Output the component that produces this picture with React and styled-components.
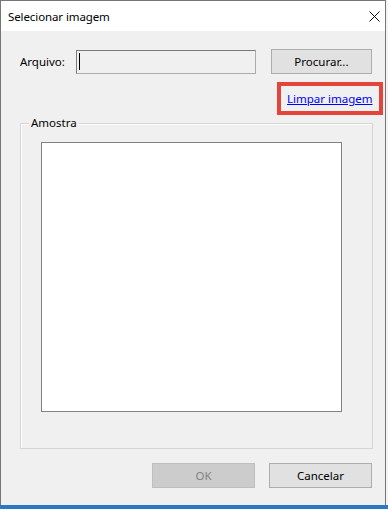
import React from "react";
import styled, { createGlobalStyle } from "styled-components";

const GlobalStyle = createGlobalStyle`
  html, body {
    margin: 0;
    padding: 0;
    background: #f4f4f4;
  }
  body {
    font-family: "Noto Sans", "Open Sans", sans-serif;
    font-size: 12px;
    color: #000;
  }
`;

const Screen = styled.div`
  width: 388px;
  height: 509px;
  display: flex;
  flex-direction: column;
`;

const Window = styled.div`
  width: 384px;
  height: 504px;
  border: 1px solid #767676;
  border-bottom: none;
  background: #f0f0f0;
  display: flex;
  flex-direction: column;
`;

const Taskbar = styled.div`
  height: 4px;
  background: #2b79c4;
`;

const TitleBar = styled.div`
  height: 30px;
  background: #ffffff;
  display: flex;
  align-items: center;
  justify-content: space-between;
  padding: 0 4px 0 7px;
  flex-shrink: 0;
`;

const Title = styled.span`
  font-size: 11.5px;
  letter-spacing: -0.1px;
`;

const CloseButton = styled.div`
  width: 14px;
  height: 14px;
  display: flex;
  align-items: center;
  justify-content: center;
`;

const Content = styled.div`
  display: flex;
  flex-direction: column;
  padding: 18px 13px 0 19px;
`;

const FileRow = styled.div`
  display: flex;
  align-items: center;
  height: 25px;
`;

const Label = styled.span`
  width: 57px;
  font-size: 11.5px;
`;

const TextBox = styled.div`
  width: 177px;
  height: 22px;
  border: 1px solid #acacac;
  border-top-color: #7a7a7a;
  border-left-color: #7a7a7a;
  background: #f0f0f0;
  display: flex;
  align-items: center;
  padding-left: 2px;
  margin-right: 15px;
  box-sizing: content-box;
`;

const Caret = styled.span`
  width: 1px;
  height: 17px;
  background: #000;
`;

const Button = styled.button`
  width: ${(p) => p.$width || 102}px;
  height: 25px;
  font-family: inherit;
  font-size: 11.5px;
  background: ${(p) => (p.disabled ? "#cccccc" : "#e1e1e1")};
  border: 1px solid ${(p) => (p.disabled ? "#bfbfbf" : "#adadad")};
  color: ${(p) => (p.disabled ? "#838383" : "#000")};
  padding: 0;
  margin: 0;
`;

const LinkRow = styled.div`
  display: flex;
  justify-content: flex-end;
  margin: 8px -11px 0 0;
`;

/* red annotation frame around the link */
const Highlight = styled.div`
  border: 4px solid #e5443a;
  height: 25px;
  width: 92px;
  display: flex;
  align-items: center;
  padding-left: 6px;
  box-sizing: content-box;
`;

const Link = styled.a`
  color: #0000ff;
  text-decoration: underline;
  font-size: 11.5px;
  white-space: nowrap;
  cursor: pointer;
`;

const Group = styled.div`
  position: relative;
  margin-top: 8px;
  width: 351px;
  height: 324px;
  border: 1px solid #d5d5d5;
  box-shadow: inset 1px 1px 0 #ffffff;
`;

const GroupCaption = styled.span`
  position: absolute;
  top: -9px;
  left: 8px;
  padding: 0 2px;
  background: #f0f0f0;
  font-size: 11.5px;
`;

const Preview = styled.div`
  margin: 18px 0 0 20px;
  width: 299px;
  height: 268px;
  background: #ffffff;
  border: 1px solid #828282;
`;

const ButtonRow = styled.div`
  display: flex;
  justify-content: flex-end;
  gap: 14px;
  margin-top: 14px;
`;

const CloseIcon = () => (
  <svg width="11" height="11" viewBox="0 0 11 11">
    <path d="M0.5 0.5 L10.5 10.5 M10.5 0.5 L0.5 10.5" stroke="#111" strokeWidth="1" />
  </svg>
);

export default function App() {
  return (
    <>
      <GlobalStyle />
      <Screen>
        <Window>
          <TitleBar>
            <Title>Selecionar imagem</Title>
            <CloseButton>
              <CloseIcon />
            </CloseButton>
          </TitleBar>
          <Content>
            <FileRow>
              <Label>Arquivo:</Label>
              <TextBox>
                <Caret />
              </TextBox>
              <Button $width={102}>Procurar...</Button>
            </FileRow>
            <LinkRow>
              <Highlight>
                <Link>Limpar imagem</Link>
              </Highlight>
            </LinkRow>
            <Group>
              <GroupCaption>Amostra</GroupCaption>
              <Preview />
            </Group>
            <ButtonRow>
              <Button $width={103} disabled>
                OK
              </Button>
              <Button $width={103}>Cancelar</Button>
            </ButtonRow>
          </Content>
        </Window>
        <Taskbar />
      </Screen>
    </>
  );
}
